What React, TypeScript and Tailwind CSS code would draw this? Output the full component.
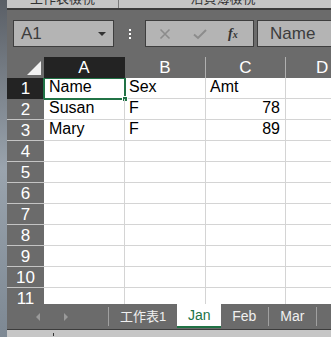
import React from "react";

const rows: string[][] = [
  ["Name", "Sex", "Amt", ""],
  ["Susan", "F", "78", ""],
  ["Mary", "F", "89", ""],
  ["", "", "", ""],
  ["", "", "", ""],
  ["", "", "", ""],
  ["", "", "", ""],
  ["", "", "", ""],
  ["", "", "", ""],
  ["", "", "", ""],
  ["", "", "", ""],
];

const cellFont = { fontFamily: '"Liberation Sans", Arial, sans-serif' };
const cjk = { fontFamily: '"Liberation Sans", "Noto Sans CJK TC", sans-serif' };

export default function App() {
  return (
    <div className="w-[331px] h-[337px] overflow-hidden flex bg-[#6b6b6b]" style={cellFont}>
      {/* blurred desktop strip on the left */}
      <div className="w-[7px] shrink-0 bg-gradient-to-b from-[#5a5f66] via-[#9aa4ae] to-[#7d8893]" />
      <div className="flex-1 flex flex-col min-w-0">
        {/* top ribbon remnant */}
        <div className="h-[8px] bg-[#c6c6c6] relative overflow-hidden flex text-[13px] text-[#333]" style={cjk}>
          <div className="w-[111px] flex justify-center -mt-[9px] leading-[16px]">工作表檢視</div>
          <div className="w-px bg-[#7a7a7a] h-full" />
          <div className="flex-1 flex justify-center -mt-[9px] leading-[16px] pr-[4px]">活頁簿檢視</div>
        </div>
        <div className="h-[2px] bg-[#3c3c3c]" />
        {/* formula bar */}
        <div className="h-[47px] bg-[#6b6b6b] flex items-start pt-[10px]">
          <div className="ml-[6px] w-[101px] h-[27px] bg-[#b4b4b4] border border-[#3e3e3e] flex items-center pl-[7px] pr-[7px]">
            <span className="text-[17px] text-[#3d3d3d] leading-none">A1</span>
            <span className="ml-auto w-0 h-0 border-l-[4px] border-r-[4px] border-t-[4px] border-l-transparent border-r-transparent border-t-[#333]" />
          </div>
          <div className="w-[31px] h-[27px] flex flex-col items-center justify-center gap-[2px]">
            <span className="w-[2px] h-[2px] bg-white" />
            <span className="w-[2px] h-[2px] bg-white" />
            <span className="w-[2px] h-[2px] bg-white" />
          </div>
          <div className="w-[109px] h-[27px] bg-[#b4b4b4] border border-[#3e3e3e] flex items-center">
            <svg width="12" height="12" viewBox="0 0 12 12" className="ml-[13px]">
              <path d="M1.5 1.5 L10.5 10.5 M10.5 1.5 L1.5 10.5" stroke="#8c8c8c" strokeWidth="1.6" fill="none" />
            </svg>
            <svg width="14" height="12" viewBox="0 0 14 12" className="ml-[22px]">
              <path d="M1 6.5 L5 10 L13 2" stroke="#8c8c8c" strokeWidth="2" fill="none" />
            </svg>
            <span className="ml-[21px] text-[14px] text-[#333] italic font-bold leading-none" style={{ fontFamily: '"Liberation Serif", serif' }}>
              f<span className="text-[10px]">x</span>
            </span>
          </div>
          <div className="ml-[3px] flex-1 h-[27px] bg-[#b4b4b4] border border-[#3e3e3e] border-r-0 flex items-center pl-[12px]">
            <span className="text-[17px] text-[#3d3d3d] leading-none">Name</span>
          </div>
        </div>
        {/* column headers */}
        <div className="h-[21px] flex text-white text-[17px] leading-none">
          <div className="w-[37px] shrink-0 bg-[#6b6b6b] relative">
            <svg width="16" height="16" viewBox="0 0 16 16" className="absolute right-[2px] bottom-[2px]">
              <path d="M15 1 L15 15 L1 15 Z" fill="#f2f2f2" />
            </svg>
          </div>
          <div className="w-[81px] shrink-0 bg-[#232323] flex items-center justify-center border-r border-[#232323]">A</div>
          <div className="w-[81px] shrink-0 bg-[#6b6b6b] flex items-center justify-center border-r border-[#b0b0b0]">B</div>
          <div className="w-[80px] shrink-0 bg-[#6b6b6b] flex items-center justify-center border-r border-[#b0b0b0]">C</div>
          <div className="flex-1 bg-[#6b6b6b] flex items-center pl-[30px]">D</div>
        </div>
        {/* grid */}
        <div className="flex-1 overflow-hidden relative bg-white">
          {rows.map((r, i) => (
            <div key={i} className="h-[21px] flex text-[16px] leading-none relative">
              <div
                className={`w-[37px] shrink-0 flex items-center justify-center text-[17px] text-white border-b ${
                  i === 0 ? "bg-[#232323] border-[#232323]" : "bg-[#6b6b6b] border-[#c4c4c4]"
                }`}
              >
                {i + 1}
              </div>
              <div className="w-[81px] shrink-0 border-r border-b border-[#d4d4d4] flex items-end pb-[3px] pl-[5px] text-black">{r[0]}</div>
              <div className="w-[81px] shrink-0 border-r border-b border-[#d4d4d4] flex items-end pb-[3px] pl-[4px] text-black">{r[1]}</div>
              <div
                className={`w-[80px] shrink-0 border-r border-b border-[#d4d4d4] flex items-end pb-[3px] text-black ${
                  i === 0 ? "pl-[4px]" : "justify-end pr-[5px]"
                }`}
              >
                {r[2]}
              </div>
              <div className="flex-1 border-b border-[#d4d4d4]" />
              {i === 0 && (
                <div className="absolute left-[36px] -top-[1px] w-[83px] h-[23px] border-2 border-[#217346] pointer-events-none">
                  <div className="absolute -right-[4px] -bottom-[4px] w-[6px] h-[6px] bg-[#217346] border border-white" />
                </div>
              )}
            </div>
          ))}
        </div>
        {/* sheet tabs */}
        <div className="h-[25px] bg-[#6b6b6b] flex items-stretch text-[14px]" style={cjk}>
          <div className="w-[101px] flex items-center">
            <span className="ml-[29px] w-0 h-0 border-t-[4px] border-b-[4px] border-r-[4px] border-t-transparent border-b-transparent border-r-[#9a9a9a]" />
            <span className="ml-[24px] w-0 h-0 border-t-[4px] border-b-[4px] border-l-[4px] border-t-transparent border-b-transparent border-l-[#9a9a9a]" />
          </div>
          <div className="w-px bg-[#a0a0a0] my-[3px]" />
          <div className="px-[11px] flex items-center text-[13px] text-[#f0f0f0]">工作表1</div>
          <div className="w-[44px] bg-white border-b-2 border-[#217346] flex items-center justify-center text-[#217346] mb-[1px]">Jan</div>
          <div className="pl-[11px] pr-[12px] flex items-center text-[#f0f0f0]">Feb</div>
          <div className="w-px bg-[#a0a0a0] my-[3px]" />
          <div className="pl-[11px] pr-[12px] flex items-center text-[#f0f0f0]">Mar</div>
          <div className="w-px bg-[#a0a0a0] my-[3px]" />
        </div>
        <div className="h-[1px] bg-[#3c3c3c]" />
        <div className="h-[7px] bg-[#c6c6c6] relative">
          <div className="absolute left-[46px] top-[3px] w-px h-[3px] bg-[#333]" />
        </div>
      </div>
    </div>
  );
}
